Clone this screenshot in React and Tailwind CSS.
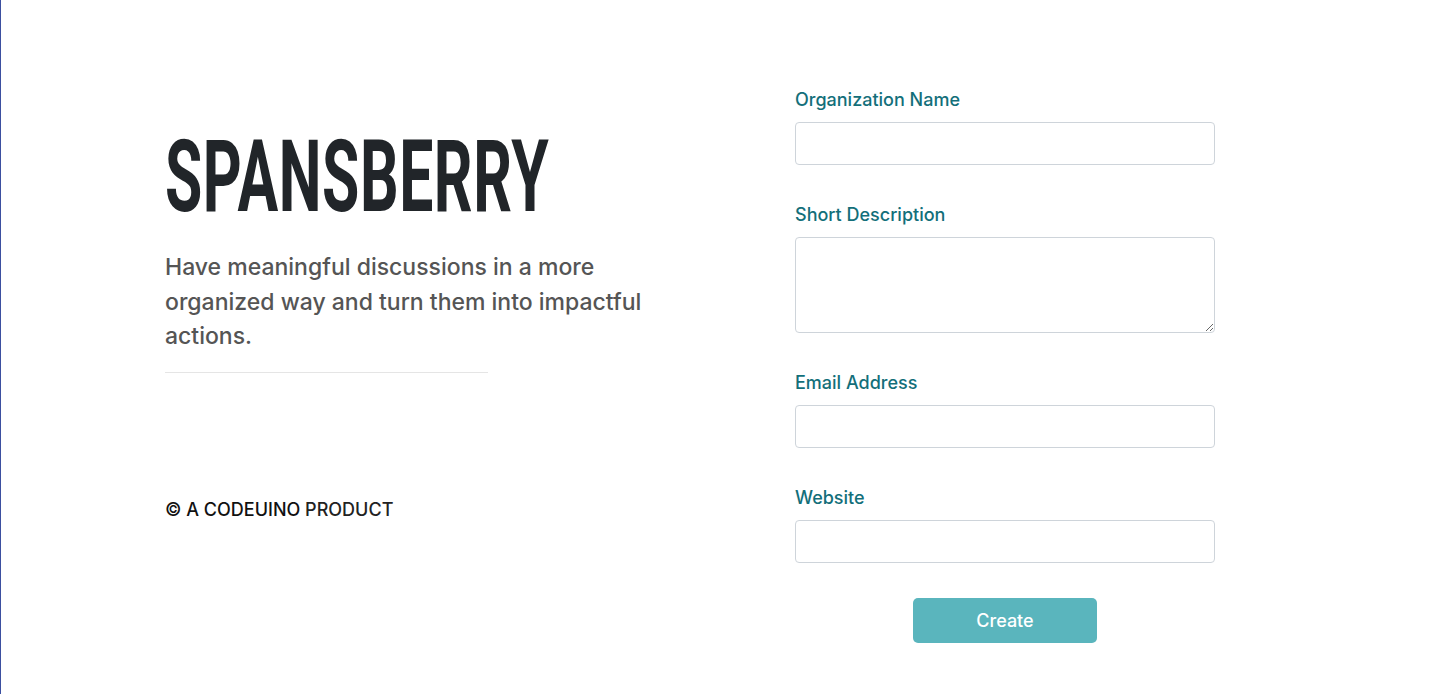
export default function App() {
  const fields = [
    { label: "Organization Name", type: "input" },
    { label: "Short Description", type: "textarea" },
    { label: "Email Address", type: "input" },
    { label: "Website", type: "input" },
  ];

  return (
    <div
      className="min-h-[694px] bg-white border-l border-[#3b4fa0]"
      style={{ fontFamily: "Inter, 'Noto Sans', sans-serif" }}
    >
      <div className="w-[1110px] mx-auto grid grid-cols-2 gap-[30px]">
        {/* left */}
        <div className="pt-[127px] flex flex-col">
          <h1
            className="text-[100px] leading-none font-bold text-[#212529] origin-left scale-x-[0.605] whitespace-nowrap tracking-[1px]"
            style={{ fontFamily: "Roboto, 'Liberation Sans', sans-serif" }}
          >
            SPANSBERRY
          </h1>
          <p className="mt-[23px] max-w-[500px] text-[23px] font-medium leading-[34.5px] text-[#555555]">
            Have meaningful discussions in a more organized way and turn them
            into impactful actions.
          </p>
          <div className="mt-[18px] w-[323px] h-px bg-[#e5e5e5]" />
          <div className="mt-[124px] text-[18px] font-medium leading-[26px] text-[#111111]">
            © A CODEUINO <span className="text-[#222222]">PRODUCT</span>
          </div>
        </div>

        {/* right */}
        <div className="flex justify-center pt-[88px]">
          <form className="w-[420px] flex flex-col">
            {fields.map((f, i) => (
              <div key={f.label} className={i > 0 ? "mt-[38px]" : ""}>
                <label className="block text-[18px] font-medium text-[#136f7a] leading-[24px] mb-[10px]">
                  {f.label}
                </label>
                {f.type === "textarea" ? (
                  <textarea className="block w-full h-[96px] border border-[#ced4da] rounded-[4px] outline-none" />
                ) : (
                  <input
                    type="text"
                    className="block w-full h-[43px] border border-[#ced4da] rounded-[4px] outline-none"
                  />
                )}
              </div>
            ))}
            <div className="flex justify-center mt-[35px]">
              <button
                type="button"
                className="w-[184px] h-[45px] rounded-[5px] bg-[#5ab5bd] text-white text-[18px] font-medium"
              >
                Create
              </button>
            </div>
          </form>
        </div>
      </div>
    </div>
  );
}
